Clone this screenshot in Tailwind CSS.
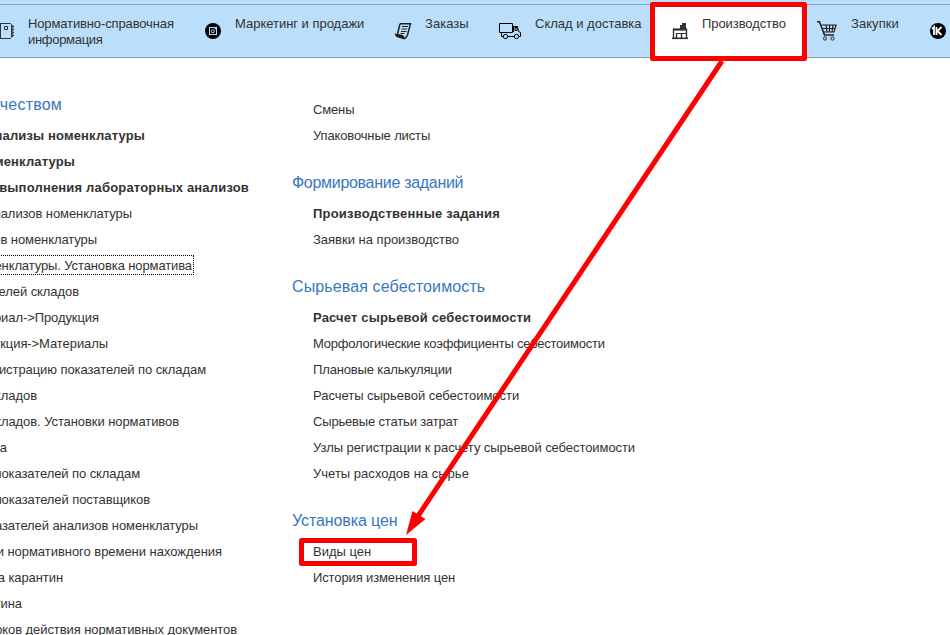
<!DOCTYPE html>
<html lang="ru"><head><meta charset="utf-8"><title>Производство</title>
<script src="https://cdn.jsdelivr.net/npm/@tailwindcss/browser@4"></script></head>
<body class="bg-white">
<div class="relative w-[950px] h-[635px] overflow-hidden font-['Liberation_Sans',Arial,sans-serif] text-[13px] text-[#333] flex flex-col">
<header class="h-[58px] shrink-0 bg-[#bbdefb] border-b border-[#8e9fae] pt-1">
<nav class="h-[53px] border-t border-[#7fa8cc] flex leading-4 whitespace-nowrap">
<a class="w-[204px] shrink-0 flex pt-[11px]">
<svg class="w-4 h-4 mt-[7px] mr-3 shrink-0" viewBox="0 0 16 16" fill="none" stroke="#333"><path d="M0 .5H10.500L11.500 1.500V14.500L10.500 15.500H0M.5 0v16M4.500 3.500h3v3h-3z"/><path d="M12.500 2v12" stroke="#555" stroke-width="1.500"/><path d="M13 3.500h1M13 6.500h1M13 9.500h1M13 12.500h1"/></svg>
<span class="tracking-[-0.13px]">Нормативно-справочная<br><span class="tracking-[-0.3px]">информация</span></span></a>
<a class="w-[190px] shrink-0 flex pt-[11px]">
<svg class="w-[18px] h-[18px] mt-[6px] mr-[13px] shrink-0" viewBox="0 0 18 18"><circle cx="9" cy="9" r="8" fill="#000"/><rect x="5.500" y="5.500" width="7" height="7" fill="none" stroke="#bbdefb"/><circle cx="8.800" cy="9.300" r="1.500" fill="none" stroke="#bbdefb"/><path d="M10 6h2v2" fill="none" stroke="#bbdefb"/></svg>
<span class="tracking-[-0.02px]">Маркетинг и продажи</span></a>
<a class="w-[104px] shrink-0 flex pt-[11px]">
<svg class="w-[18px] h-[18px] mt-[6px] mr-[13px] shrink-0" viewBox="0 0 18 18" fill="none" stroke="#222"><path d="M6 1.700H16.500L13.500 13Q12 16.500 10 16.500M6 1.700L3.500 12" stroke-width="1.500"/><path d="M1 12l8 1.500 1.500 3.500-8-2.500z" fill="#111"/><path d="M8 4.500h6M7.500 7h5.500M7 9.500h5.500M6.500 11.500h4" stroke-width="1.200"/></svg>
<span class="tracking-[0.03px]">Заказы</span></a>
<a class="w-[152px] shrink-0 flex pt-[11px]">
<svg class="w-6 h-[18px] mt-[6px] mr-[13px] shrink-0" viewBox="0 0 24 18" fill="none" stroke="#000"><path d="M1.500 1.500h13v9h-13zM14.500 4.500h5l1 5 2 1v4h-2M17 5.500h2v3h-2zM15.500 5v5M3.500 10.500v4h2M9.500 14.500h7"/><circle cx="7.500" cy="14.500" r="2.200"/><circle cx="18.500" cy="14.500" r="2.200"/></svg>
<span>Склад и доставка</span></a>
<a class="w-[156px] shrink-0 bg-white flex pt-[11px] pl-[21px]">
<svg class="w-[18px] h-[18px] mt-[6px] mr-[13px] shrink-0" viewBox="0 0 18 18" fill="none" stroke="#333"><path d="M2.500 16V7.500h13V16M5.500 11.500V16M10.500 11.500V16" stroke-width="1.400"/><path d="M5 11.500h10"/><path d="M1 16.300h16" stroke-width="1.600"/><path d="M9 7V3h2V1h4v6z" fill="#333" stroke="none"/><path d="M2 7.500h14" stroke-width="2"/></svg>
<span class="tracking-[-0.08px]">Производство</span></a>
<a class="w-[122px] shrink-0 flex pt-[11px] pl-[11px]">
<svg class="w-5 h-5 mt-[5px] mr-[14px] shrink-0" viewBox="0 0 20 20" fill="none" stroke="#222"><path d="M0 .8h2.500L7.500 14h9.500" stroke-width="1.600"/><path d="M4.500 4h14.500l-2 7H7M6 7.500h12M9 4l1 7M12.500 4v7M16 4l-1 7" stroke-width="1.200"/><circle cx="8" cy="17.500" r="1.600"/><circle cx="15.500" cy="17.500" r="1.600"/></svg>
<span class="tracking-[0.06px]">Закупки</span></a>
<a class="shrink-0 pt-[17px]"><svg class="w-[18px] h-[18px]" viewBox="0 0 18 18"><circle cx="10" cy="9" r="8" fill="#000"/><path d="M4 7l2-2v8M8.500 5v8M13.500 5L9.500 9l4 4" fill="none" stroke="#fff" stroke-width="1.800"/></svg></a>
</nav></header>
<main class="flex grow min-h-0 pt-[34px] leading-[26px] whitespace-nowrap">
<section class="w-[292px] shrink-0">
<h2 class="w-[62px] h-[31px] flex justify-end text-[16px] tracking-[0.2px] text-[#3878bd]">ачеством</h2>
<ul class="font-bold tracking-[0.14px]">
<li class="w-[145px] flex justify-end">нализы номенклатуры</li>
<li class="w-[75px] flex justify-end">менклатуры</li>
<li class="w-[249px] flex justify-end tracking-[0.18px]">выполнения лабораторных анализов</li></ul>
<ul class="tracking-[-0.08px]">
<li class="w-[132px] flex justify-end">нализов номенклатуры</li>
<li class="w-[97px] flex justify-end">ов номенклатуры</li>
<li class="w-[194px] h-[26px] flex justify-end items-start pt-[2px]"><span class="h-5 w-[200px] flex justify-end shrink-0 leading-5 pr-px tracking-[-0.11px] border border-dotted border-black">енклатуры. Установка норматива</span></li>
<li class="w-[79px] flex justify-end">елей складов</li>
<li class="w-[99px] flex justify-end">риал-&gt;Продукция</li>
<li class="w-[108px] flex justify-end">укция-&gt;Материалы</li>
<li class="w-[206px] flex justify-end">истрацию показателей по складам</li>
<li class="w-[37px] flex justify-end">кладов</li>
<li class="w-[179px] flex justify-end">кладов. Установки нормативов</li>
<li class="w-[7px] flex justify-end">а</li>
<li class="w-[140px] flex justify-end">показателей по складам</li>
<li class="w-[150px] flex justify-end">показателей поставщиков</li>
<li class="w-[198px] flex justify-end">азателей анализов номенклатуры</li>
<li class="w-[222px] flex justify-end tracking-[-0.04px]">и нормативного времени нахождения</li>
<li class="w-[63px] flex justify-end">а карантин</li>
<li class="w-[22px] flex justify-end">тина</li>
<li class="w-[237px] flex justify-end">оков действия нормативных документов</li></ul>
</section>
<section class="w-[400px] pt-[5px]">
<ul class="pl-[21px] mb-[21px]"><li class="tracking-[-0.15px]">Смены</li><li class="tracking-[-0.14px]">Упаковочные листы</li></ul>
<h2 class="h-[31px] text-[16px] text-[#3878bd] tracking-[-0.3px]">Формирование заданий</h2>
<ul class="pl-[21px] mb-[21px]"><li class="font-bold tracking-[0.21px]">Производственные задания</li><li>Заявки на производство</li></ul>
<h2 class="h-[31px] text-[16px] text-[#3878bd] tracking-[0.12px]">Сырьевая себестоимость</h2>
<ul class="pl-[21px] mb-[21px]"><li class="font-bold tracking-[0.16px]">Расчет сырьевой себестоимости</li><li class="tracking-[-0.23px]">Морфологические коэффициенты себестоимости</li><li class="tracking-[-0.15px]">Плановые калькуляции</li><li class="tracking-[-0.03px]">Расчеты сырьевой себестоимости</li><li class="tracking-[-0.17px]">Сырьевые статьи затрат</li><li class="tracking-[-0.07px]">Узлы регистрации к расчету сырьевой себестоимости</li><li class="tracking-[0.02px]">Учеты расходов на сырье</li></ul>
<h2 class="h-[31px] text-[16px] text-[#3878bd] tracking-[-0.1px]">Установка цен</h2>
<ul class="pl-[21px]"><li>Виды цен</li><li class="tracking-[-0.12px]">История изменения цен</li></ul>
</section>
</main>
<svg class="absolute inset-0 w-[950px] h-[635px] pointer-events-none" viewBox="0 0 950 635" fill="none" stroke="#f00" stroke-width="5" stroke-linejoin="round"><rect x="652.500" y="4.500" width="152" height="54"/><rect x="301.500" y="540.500" width="113" height="23"/><path d="M722 61L418 516"/><path d="M406 535L412.500 511L425.500 519Z" fill="#f00" stroke="none"/></svg>
</div></body></html>
